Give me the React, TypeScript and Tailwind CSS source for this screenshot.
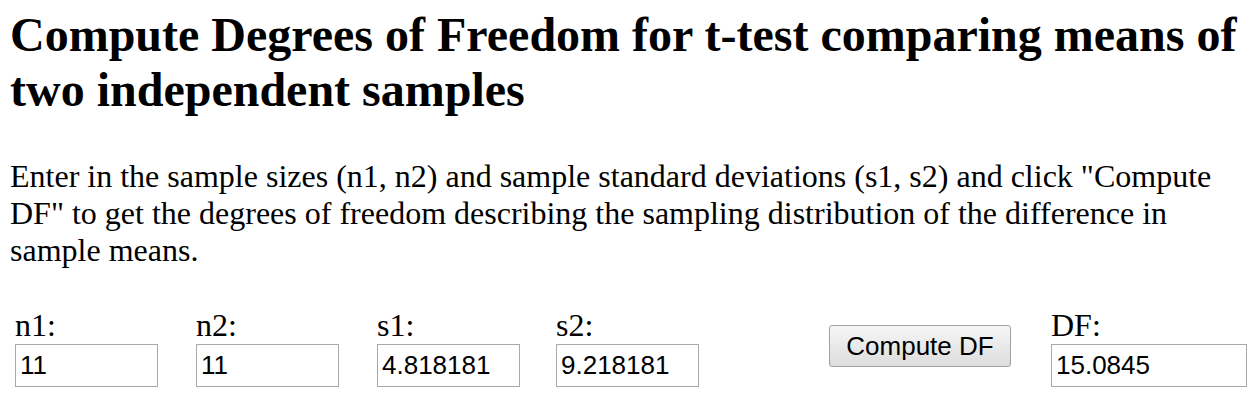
import React from "react";

const Field = ({
  label,
  value,
  width,
  boxWidth = "w-[143px]",
}: {
  label: string;
  value: string;
  width: string;
  boxWidth?: string;
}) => (
  <div className={`${width} flex flex-col shrink-0`}>
    <span className="text-[32px] leading-[37px]">{label}</span>
    <input
      readOnly
      value={value}
      className={`${boxWidth} h-[43px] border border-[#a9a9a9] bg-white px-[4px] text-[26px] font-['Liberation_Sans',Arial,sans-serif] text-black outline-none`}
    />
  </div>
);

const App = () => {
  return (
    <div className="w-[1260px] h-[410px] overflow-hidden bg-white text-black font-['Liberation_Serif','Times_New_Roman',serif] px-[10px]">
      <h2 className="pt-[7px] text-[48px] leading-[55px] font-bold">
        Compute Degrees of Freedom for t-test comparing means of two
        independent samples
      </h2>

      <p className="mt-[41px] text-[32px] leading-[37px]">
        Enter in the sample sizes (n1, n2) and sample standard deviations (s1,
        s2) and click "Compute DF" to get the degrees of freedom describing the
        sampling distribution of the difference in sample means.
      </p>

      <div className="mt-[38px] flex items-center pl-[5px]">
        <Field label="n1:" value="11" width="w-[181px]" />
        <Field label="n2:" value="11" width="w-[181px]" />
        <Field label="s1:" value="4.818181" width="w-[179px]" />
        <Field label="s2:" value="9.218181" width="w-[273px]" />
        <div className="w-[222px] shrink-0 pb-[2px]">
          <button className="w-[182px] h-[42px] rounded-[3px] border border-[#a0a0a0] bg-gradient-to-b from-[#f6f6f6] to-[#dddddd] text-[26px] font-['Liberation_Sans',Arial,sans-serif] text-black">
            Compute DF
          </button>
        </div>
        <Field
          label="DF:"
          value="15.0845"
          width="w-[196px]"
          boxWidth="w-[196px]"
        />
      </div>
    </div>
  );
};

export default App;
